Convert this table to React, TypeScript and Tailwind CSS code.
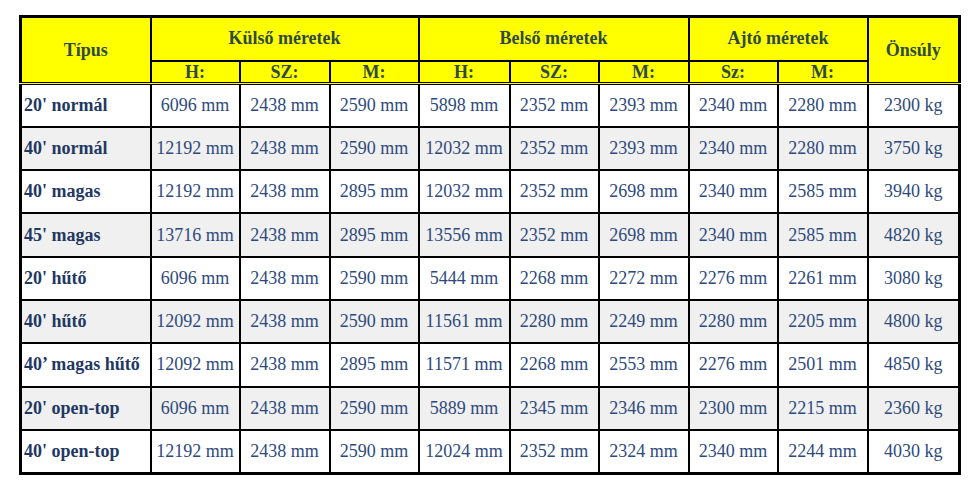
import React from 'react';

type Row = {
  name: string;
  values: string[];
  weight: string;
}

const rows: Row[] = [
  { name: "20' normál", values: ['6096', '2438', '2590', '5898', '2352', '2393', '2340', '2280'], weight: '2300' },
  { name: "40' normál", values: ['12192', '2438', '2590', '12032', '2352', '2393', '2340', '2280'], weight: '3750' },
  { name: "40' magas", values: ['12192', '2438', '2895', '12032', '2352', '2698', '2340', '2585'], weight: '3940' },
  { name: "45' magas", values: ['13716', '2438', '2895', '13556', '2352', '2698', '2340', '2585'], weight: '4820' },
  { name: "20' hűtő", values: ['6096', '2438', '2590', '5444', '2268', '2272', '2276', '2261'], weight: '3080' },
  { name: "40' hűtő", values: ['12092', '2438', '2590', '11561', '2280', '2249', '2280', '2205'], weight: '4800' },
  { name: '40’ magas hűtő', values: ['12092', '2438', '2895', '11571', '2268', '2553', '2276', '2501'], weight: '4850' },
  { name: "20' open-top", values: ['6096', '2438', '2590', '5889', '2345', '2346', '2300', '2215'], weight: '2360' },
  { name: "40' open-top", values: ['12192', '2438', '2590', '12024', '2352', '2324', '2340', '2244'], weight: '4030' },
];

const colWidths = ['w-[130px]', 'w-[89px]', 'w-[90px]', 'w-[89px]', 'w-[91px]', 'w-[89px]', 'w-[90px]', 'w-[89px]', 'w-[90px]', 'w-[92px]'];

const App: React.FC = () => {
  const head = 'bg-[#ffff00] border-2 border-black text-[#2f4a42] font-bold text-center';
  const sub = 'bg-[#ffff00] border-2 border-b-[3px] border-double border-black text-[#2f4a42] font-bold text-center h-[23px] leading-none pt-[1px]';

  return (
    <div className="w-[979px] h-[494px] bg-white pt-[15px] pl-[19px]" style={{ fontFamily: '"Liberation Serif", "Times New Roman", serif' }}>
      <table className="table-fixed border-collapse border-[3px] border-black w-[940px] text-[18px]">
        <colgroup>
          {colWidths.map((w, i) => <col key={i} className={w} />)}
        </colgroup>
        <thead>
          <tr>
            <th rowSpan={2} className={head + ' border-b-[3px] border-double'}>Típus</th>
            <th colSpan={3} className={head + ' h-[44px]'}>Külső méretek</th>
            <th colSpan={3} className={head}>Belső méretek</th>
            <th colSpan={2} className={head}>Ajtó méretek</th>
            <th rowSpan={2} className={head + ' border-b-[3px] border-double'}>Önsúly</th>
          </tr>
          <tr>
            <th className={sub}>H:</th>
            <th className={sub}>SZ:</th>
            <th className={sub}>M:</th>
            <th className={sub}>H:</th>
            <th className={sub}>SZ:</th>
            <th className={sub}>M:</th>
            <th className={sub}>Sz:</th>
            <th className={sub}>M:</th>
          </tr>
        </thead>
        <tbody>
          {rows.map((row, i) => (
            <tr key={row.name} className={i % 2 === 1 ? 'bg-[#f0f0f0]' : 'bg-white'}>
              <td className="border-2 border-black h-[43.3px] pl-[2px] font-bold text-[#1f3864] whitespace-nowrap">{row.name}</td>
              {row.values.map((v, j) => (
                <td key={j} className="border-2 border-black text-center text-[#2e4a7c] whitespace-nowrap">{v} mm</td>
              ))}
              <td className="border-2 border-black text-center text-[#2e4a7c] whitespace-nowrap">{row.weight} kg</td>
            </tr>
          ))}
        </tbody>
      </table>
    </div>
  );
};

export default App;
